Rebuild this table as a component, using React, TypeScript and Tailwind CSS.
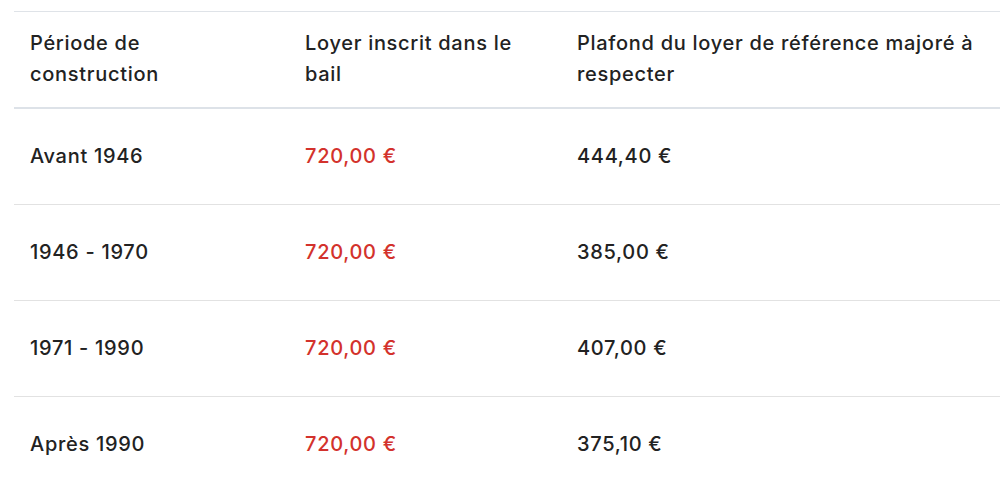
export default function App() {
  const rows = [
    ["Avant 1946", "720,00 €", "444,40 €"],
    ["1946 - 1970", "720,00 €", "385,00 €"],
    ["1971 - 1990", "720,00 €", "407,00 €"],
    ["Après 1990", "720,00 €", "375,10 €"],
  ];
  return (
    <div
      className="bg-white w-[1000px] h-[489px] overflow-hidden pt-[11px] pl-[14px] text-[#222222]"
      style={{ fontFamily: "Inter, 'Noto Sans', sans-serif" }}
    >
      <table className="w-[986px] border-collapse table-fixed text-[20px] tracking-[0.7px] font-medium">
        <colgroup>
          <col className="w-[275px]" />
          <col className="w-[272px]" />
          <col className="w-[439px]" />
        </colgroup>
        <thead>
          <tr className="border-t border-[#dfe3e8] border-b-2 border-b-[#dde2e8]">
            <th className="text-left font-medium align-top pl-4 pr-4 pt-[16px] pb-[17px] leading-[31px]">
              Période de construction
            </th>
            <th className="text-left font-medium align-top pl-4 pr-4 pt-[16px] pb-[17px] leading-[31px]">
              Loyer inscrit dans le bail
            </th>
            <th className="text-left font-medium align-top pl-4 pr-4 pt-[16px] pb-[17px] leading-[31px]">
              Plafond du loyer de référence majoré à respecter
            </th>
          </tr>
        </thead>
        <tbody>
          {rows.map((r, i) => (
            <tr key={i} className="border-b border-[#e2e2e2] h-[96px]">
              <td className="pl-4 align-middle">{r[0]}</td>
              <td className="pl-4 align-middle text-[#d3322c]">{r[1]}</td>
              <td className="pl-4 align-middle">{r[2]}</td>
            </tr>
          ))}
        </tbody>
      </table>
    </div>
  );
}
